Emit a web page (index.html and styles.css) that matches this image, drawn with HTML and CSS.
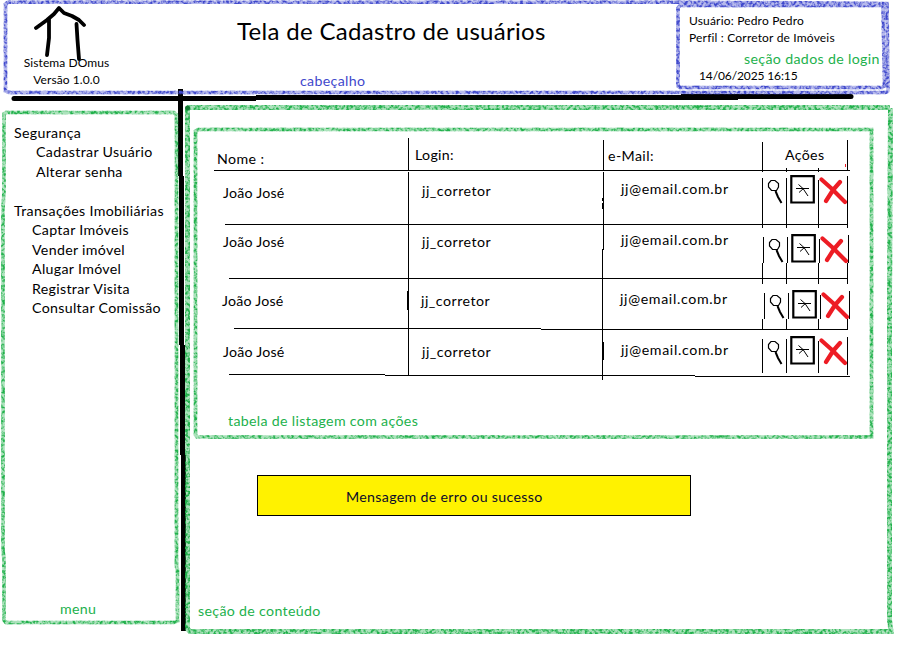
FILE: index.html
```html
<!DOCTYPE html>
<html lang="pt-BR">
<head>
<meta charset="utf-8">
<title>Tela de Cadastro de usuários</title>
<link rel="stylesheet" href="styles.css">
</head>
<body>
<div class="screen">
  <header class="header">
    <div class="brand">
      <svg class="house" viewBox="34 5 54 57" width="54" height="57"><path d="M36 28 47 20 54 14 59 8 64 13 72 16 79 20 84 25M49 19 49 38 47 55M76.500 24 77.500 40 79 59"/></svg>
      <span class="brand-name">Sistema DOmus</span>
      <span class="brand-version">Versão 1.0.0</span>
    </div>
    <div class="heading">
      <h1>Tela de Cadastro de usuários</h1>
      <span class="note note-header">cabeçalho</span>
    </div>
    <div class="login">
      <span class="user">Usuário: Pedro Pedro</span>
      <span class="profile">Perfil : Corretor de Imóveis</span>
      <span class="note note-login">seção dados de login</span>
      <span class="date">14/06/2025 16:15</span>
    </div>
  </header>
  <div class="columns">
    <nav class="menu">
      <ul>
        <li>Segurança
          <ul class="sub sub-security"><li>Cadastrar Usuário</li><li>Alterar senha</li></ul>
        </li>
        <li class="trans">Transações Imobiliárias
          <ul class="sub"><li>Captar Imóveis</li><li>Vender imóvel</li><li>Alugar Imóvel</li><li>Registrar Visita</li><li>Consultar Comissão</li></ul>
        </li>
      </ul>
      <span class="note note-menu">menu</span>
    </nav>
    <main class="content">
      <section class="listing">
        <div class="row head"><span class="name">Nome :</span><span class="user-login">Login:</span><span class="mail">e-Mail:</span><span class="actions">Ações</span></div>
        <div class="row r1"><span class="name">João José</span><span class="user-login">jj_corretor</span><span class="mail">jj@email.com.br</span><span class="actions"><svg class="i-view"><use href="#view"/></svg><svg class="i-edit"><use href="#edit"/></svg><svg class="i-del"><use href="#del"/></svg></span></div>
        <div class="row r2"><span class="name">João José</span><span class="user-login">jj_corretor</span><span class="mail">jj@email.com.br</span><span class="actions"><svg class="i-view"><use href="#view"/></svg><svg class="i-edit"><use href="#edit"/></svg><svg class="i-del"><use href="#del"/></svg></span></div>
        <div class="row r3"><span class="name">João José</span><span class="user-login">jj_corretor</span><span class="mail">jj@email.com.br</span><span class="actions"><svg class="i-view"><use href="#view"/></svg><svg class="i-edit"><use href="#edit"/></svg><svg class="i-del"><use href="#del"/></svg></span></div>
        <div class="row r4"><span class="name">João José</span><span class="user-login">jj_corretor</span><span class="mail">jj@email.com.br</span><span class="actions"><svg class="i-view"><use href="#view"/></svg><svg class="i-edit"><use href="#edit"/></svg><svg class="i-del"><use href="#del"/></svg></span></div>
        <div class="note note-table">tabela de listagem com ações</div>
      </section>
      <div class="message"><span>Mensagem de erro ou sucesso</span></div>
      <span class="note note-content">seção de conteúdo</span>
    </main>
  </div>

  <svg class="ink" viewBox="0 0 901 645" width="901" height="645" aria-hidden="true">
    <defs>
      <filter id="crayon" filterUnits="userSpaceOnUse" x="0" y="0" width="901" height="645" color-interpolation-filters="sRGB">
        <feTurbulence type="fractalNoise" baseFrequency="0.34" numOctaves="2" seed="7" result="n"/>
        <feColorMatrix in="n" type="matrix" values="0 0 0 0 0  0 0 0 0 0  0 0 0 0 0  3.4 0 0 0 -1.35" result="grain"/>
        <feGaussianBlur in="SourceGraphic" stdDeviation="0.45" result="soft"/>
        <feComposite in="soft" in2="grain" operator="in" result="marks"/>
        <feComponentTransfer in="soft" result="wash"><feFuncA type="linear" slope="0.38"/></feComponentTransfer>
        <feMerge><feMergeNode in="wash"/><feMergeNode in="marks"/></feMerge>
      </filter>
      <symbol id="view" viewBox="0 0 16 26"><path d="M4 1.500H8L11.500 4.500V8L9.500 11.500H4.500L1.500 8V4.500Z" fill="none" stroke="#000" stroke-width="1.200"/><path d="M8.500 12 11 18 14.500 24" fill="none" stroke="#000" stroke-width="2"/></symbol>
      <symbol id="edit" viewBox="0 0 25 29"><path d="M1.300 1.200H23.800V27.500H1.300Z" fill="none" stroke="#000" stroke-width="2.200"/><path d="M6 13.500H19M8.500 9.500 13 13.500 18 21M9 17.500 14 13" fill="none" stroke="#000"/></symbol>
      <symbol id="del" viewBox="0 0 28 28"><path d="M2.500 2.500 12 11 26 25M21 5 14 13 7 24" fill="none" stroke="#ed1c24" stroke-width="4.200" stroke-linecap="round" stroke-linejoin="round"/></symbol>
    </defs>
    <path class="bar" d="M180.500 89V176M181.500 176V345M182.500 345V455M183.500 455V631"/>
    <path class="bar" d="M14 98.500H256M256 97.500H738M681 96.500H851"/>
    <circle cx="14" cy="98.500" r="2.500"/><circle cx="851" cy="96.500" r="2.500"/>
    <g class="blue" filter="url(#crayon)">
      <path d="M5.500 4 8 2.200H687L887 3.500L888 90Q888 92.500 884 92.500H9L5.500 91Z"/>
      <path d="M678 8 680 5.500H883L884.500 86 882 87.500H680L678 86Z"/>
    </g>
    <g class="green" filter="url(#crayon)">
      <path d="M4 114 6 112.500H174L176.500 115V567L177.500 569V621L174 622.500H6L4 620V560L3 550V210L4 190Z"/>
      <path d="M195.500 131 198 129.500H871.500V437H197L195.500 435Z"/>
      <path class="wide" d="M187 107.500H890"/>
      <path class="wide" d="M187.500 108V629L190 631.500H891L889.500 620V300L890.500 108"/>
    </g>
    <circle cx="187.500" cy="108" r="2.500" fill="#117a32"/>
    <path class="rule" d="M214 170.500H850M225 224.500H848M229 278.500H848M234 328.500H541M541 329.500H848M229 374.500H385M385 375.500H695M695 376.500H850
      M408.500 138V170M408.500 172V375M407.500 291V310
      M603.500 140V170M603.500 172V250M602.500 249V380M602.500 198V201M602.500 203V209M603.500 342V360
      M762.500 142V172M762.500 178V228M763.500 237V263M762.500 263V284M764.500 293V319M762.500 319V329M762.500 339V373
      M786.500 168V172M786.500 178V228M787.500 237V263M786.500 263V284M788.500 293V319M786.500 319V329M786.500 339V373
      M818.500 168V172M818.500 180V228M819.500 239V263M818.500 263V284M820.500 295V319M818.500 319V329M818.500 341V373
      M847.500 140V171M847.500 176V228M848.500 235V263M847.500 263V284M849.500 291V319M847.500 319V329M847.500 337V375"/>
    <path d="M845.500 164V167" stroke="#ed1c24"/>
  </svg>
</div>
</body>
</html>
```
FILE: styles.css
```css
* { box-sizing: border-box; }
body { margin: 0; background: #fff; color: #000; font: 14.2px/20px Lato, "Liberation Sans", sans-serif; letter-spacing: 0.32px; }
.screen { position: relative; width: 901px; height: 645px; overflow: hidden; }
.ink { position: absolute; left: 0; top: 0; pointer-events: none; }
.bar { fill: none; stroke: #000; stroke-width: 5; }
.rule { fill: none; stroke: #000; shape-rendering: crispEdges; }
.blue, .green { fill: none; stroke-width: 3.6; }
.blue { stroke: #3f48cc; }
.green { stroke: #22b14c; }
.wide { stroke-width: 5; }
span { white-space: nowrap; }
ul { list-style: none; margin: 0; padding: 0; }

.header { display: grid; grid-template-columns: 237px 439px 1fr; height: 96px; }
.brand { width: 133px; padding-top: 5px; display: flex; flex-direction: column; align-items: center; font-size: 12px; line-height: 17px; letter-spacing: 0.08px; }
.house { margin: 0 12px -8px 0; height: 57px; flex: none; fill: none; stroke: #000; stroke-width: 3.8; stroke-linecap: round; stroke-linejoin: round; }
h1 { margin: 0; padding-top: 16px; font-size: 24px; line-height: 30px; font-weight: 400; white-space: nowrap; letter-spacing: 0.31px; }
.note { color: #22b14c; }
.note-header { display: block; color: #3f48cc; margin: 25px 0 0 63px; }
.login { display: flex; flex-direction: column; padding: 12px 0 0 13px; font-size: 12px; line-height: 17px; letter-spacing: 0.18px; }
.note-login { font-size: 14.2px; line-height: 20px; margin: 3px 0 0 55px; letter-spacing: 0.34px; }
.date { margin: -2px 0 0 10px; letter-spacing: -0.12px; }

.columns { display: grid; grid-template-columns: 187px 1fr; height: 549px; }
.menu { padding: 26.75px 0 0 14px; line-height: 19.5px; white-space: nowrap; display: flex; flex-direction: column; }
.sub { padding-left: 18px; }
.sub-security { padding-left: 22px; }
.trans { margin-top: 19.5px; }
.note-menu { margin: 281px 0 0 46px; }

.content { display: flex; flex-direction: column; }
.listing { width: 664px; height: 337px; padding: 42px 0 0 27px; }
.row { display: grid; grid-template-columns: 194px 195px 159px 86px; }
.row .name { padding-left: 9px; letter-spacing: 0.22px; }
.row .user-login { padding-left: 14px; letter-spacing: 0.5px; }
.row .mail { padding-left: 18px; letter-spacing: 0.66px; }
.row.head .name { padding: 11px 0 0 3px; letter-spacing: 0.4px; }
.row.head .user-login { padding: 7px 0 0 7px; letter-spacing: 0.32px; }
.row.head .mail { padding: 8px 0 0 5px; letter-spacing: 0.4px; }
.row.head .actions { padding: 7px 0 0 23px; display: block; }
.head { height: 32px; }
.r1, .r2 { height: 54px; }
.r3 { height: 51px; }
.r4 { height: 47px; }
.r1 .name { padding-top: 13px; } .r1 .user-login { padding-top: 11px; } .r1 .mail { padding-top: 9px; }
.r2 .name, .r2 .user-login { padding-top: 8px; } .r2 .mail { padding-top: 6px; }
.r3 .name, .r3 .user-login { padding-top: 13px; margin-left: -1px; } .r3 .mail { padding-top: 11px; margin-left: -1px; }
.r4 .name, .r4 .user-login { padding-top: 13px; } .r4 .mail { padding-top: 11px; }
.actions { display: flex; align-items: flex-start; padding-left: 5px; }
.r1 .actions { padding-top: 5px; }
.r2 .actions { padding: 10px 0 0 6px; }
.r3 .actions { padding: 12px 0 0 7px; }
.r4 .actions { padding-top: 7px; }
.i-view { width: 16px; height: 26px; margin: 4px 7px 0 0; flex: none; }
.i-edit { width: 25px; height: 29px; margin-right: 4px; flex: none; }
.i-del { width: 28px; height: 28px; margin-top: 2px; flex: none; }
.note-table { margin: 35px 0 0 14px; height: 17px; overflow: hidden; white-space: nowrap; }
.message { width: 434px; height: 41px; margin: 42px 0 0 70px; border: 1px solid #000; background: #fff200; color: #0b0b2b; padding: 11px 0 0 88px; }
.note-content { margin: 85px 0 0 11px; }
```
